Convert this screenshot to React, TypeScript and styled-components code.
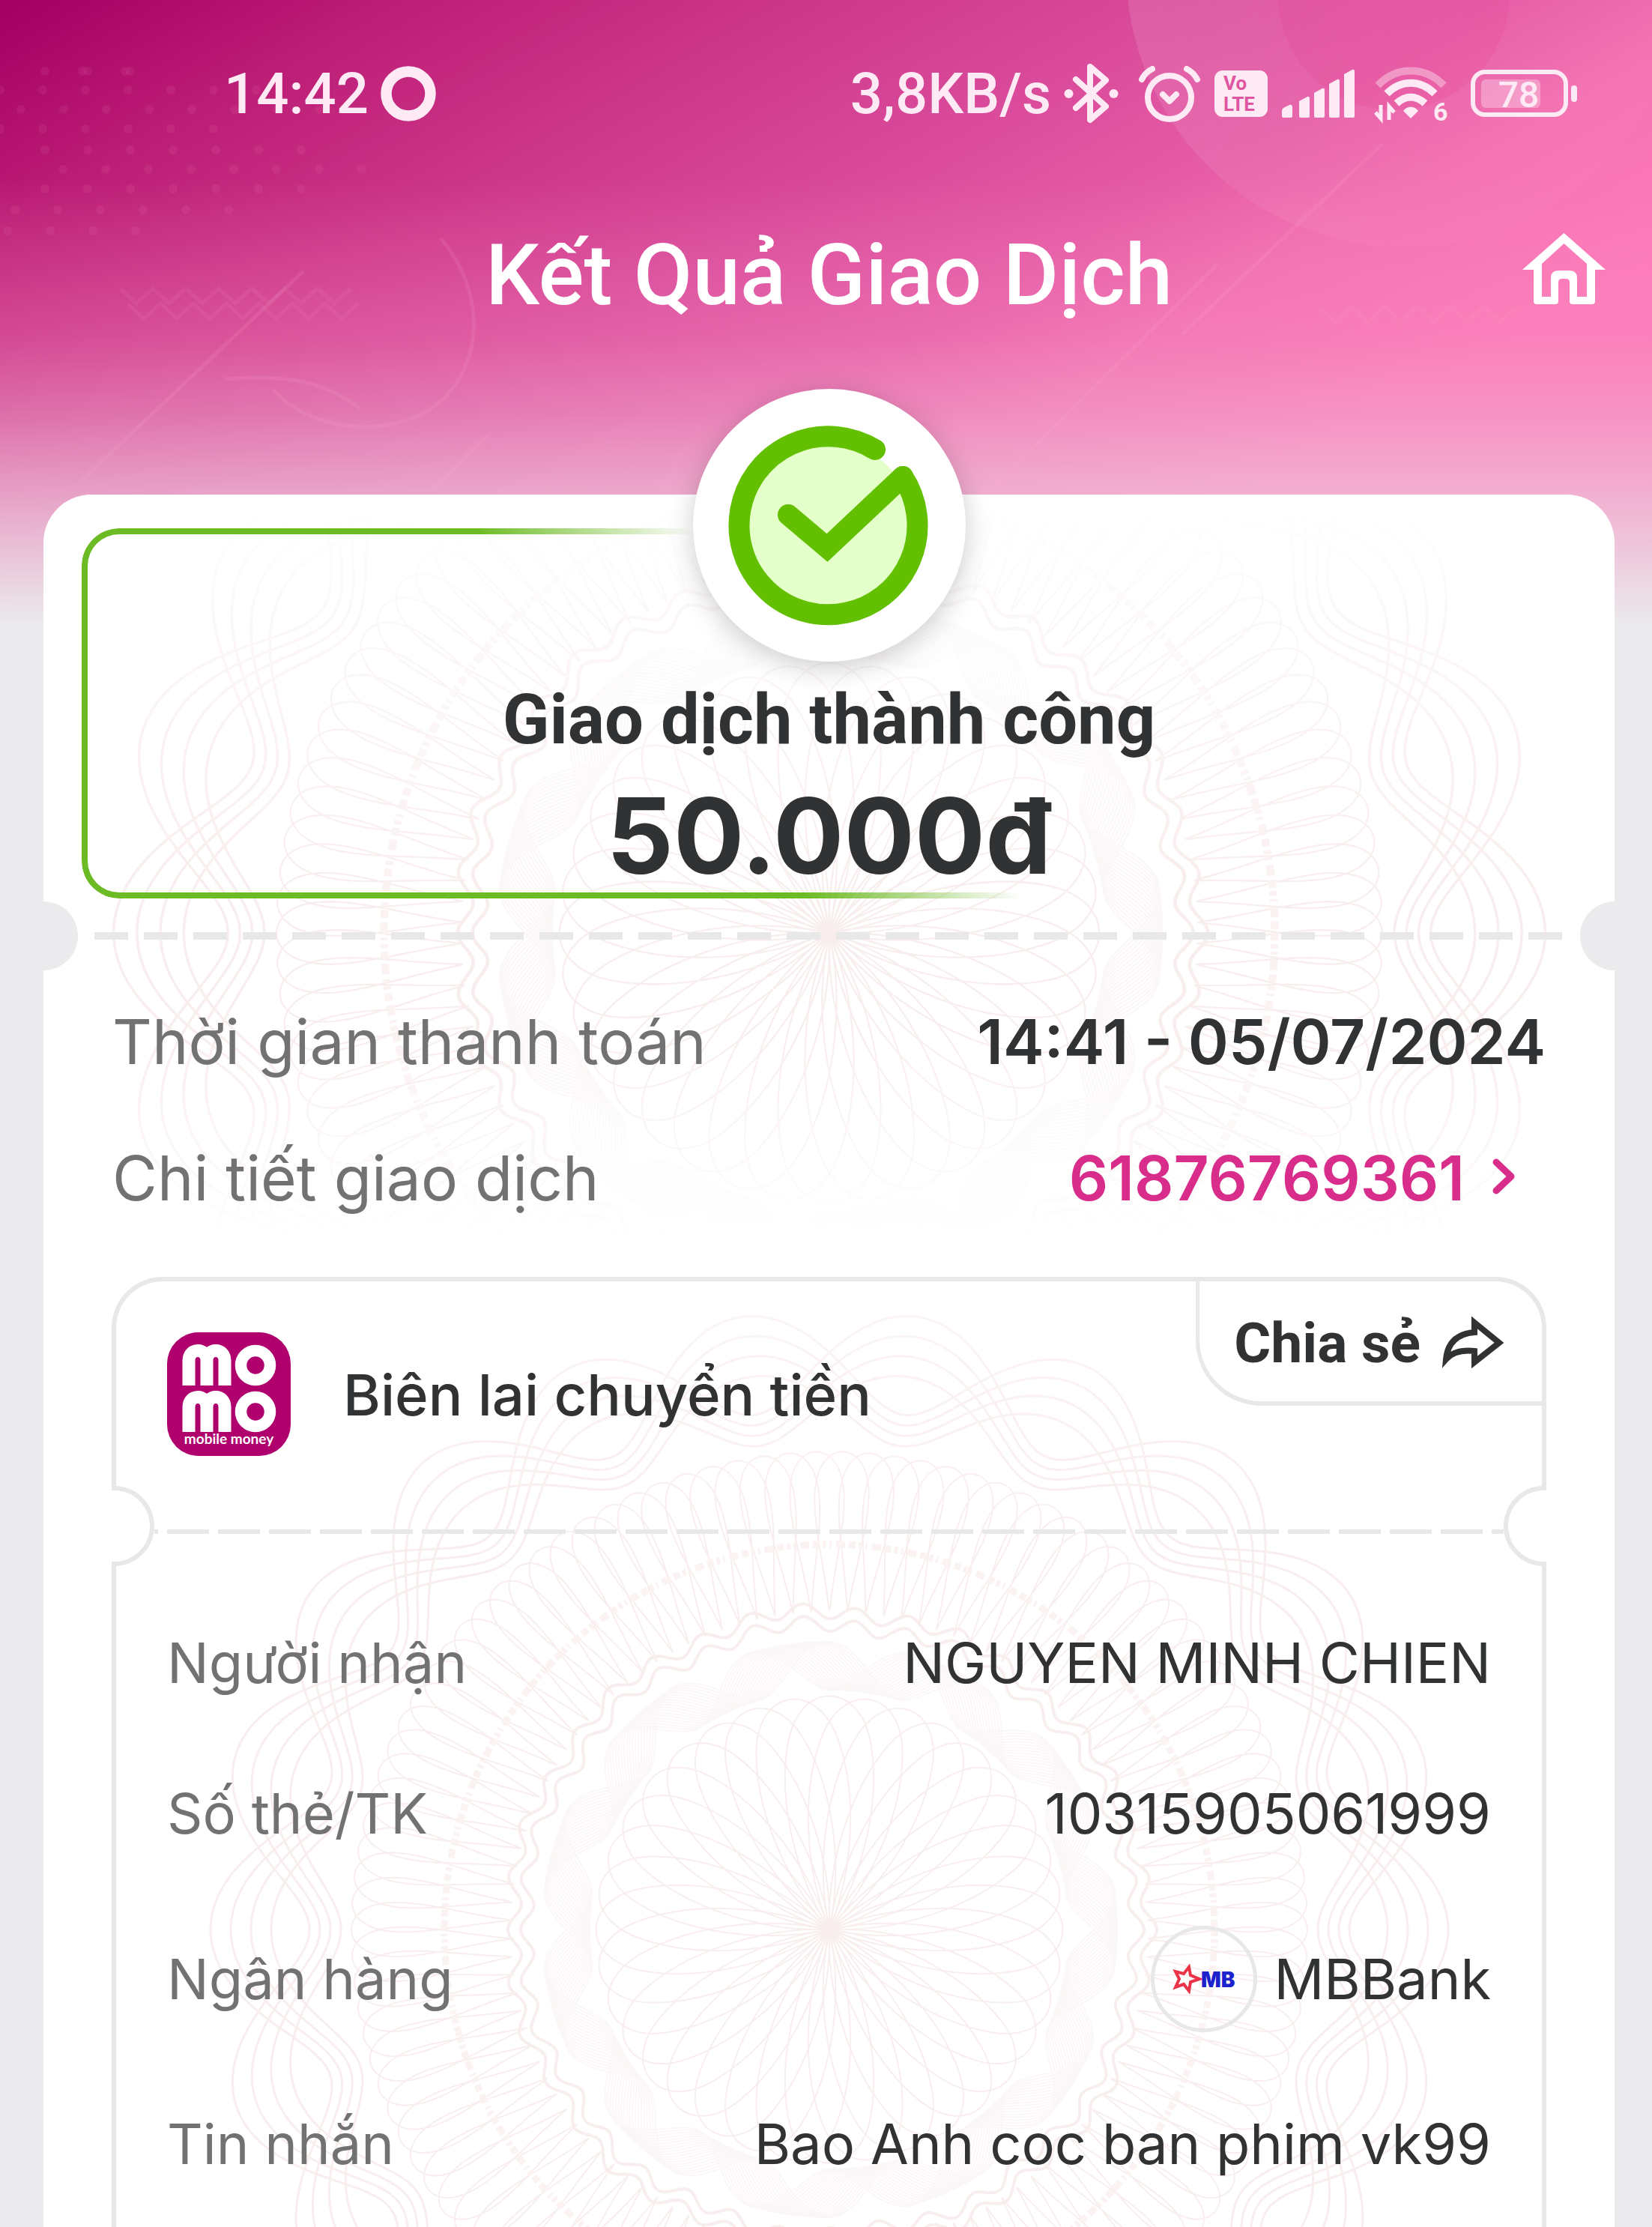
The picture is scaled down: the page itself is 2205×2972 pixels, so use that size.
import React from "react";
import styled, { createGlobalStyle } from "styled-components";

const color = {
  page: "#ebebed",
  line: "#e8e8e8",
  text: "#303233",
  label: "#727272",
  pink: "#d82d8b",
  green: "#62c000",
  outline: "#6cbb24",
  status: "#fdeaf4",
  brand: "#af006d",
};

const GlobalStyle = createGlobalStyle`
  * { box-sizing: border-box; }
  body {
    margin: 0;
    background: ${color.page};
    color: ${color.text};
    font-family: Inter, "Noto Sans", sans-serif;
  }
  h1, h2, p, dl, dt, dd { margin: 0; }
  button { border: 0; padding: 0; background: none; font: inherit; color: inherit; cursor: pointer; }
  a { color: inherit; text-decoration: none; }
  svg { display: block; flex: none; }
`;

/* ---------- page frame ---------- */

const Page = styled.div`
  position: relative;
  display: flex;
  flex-direction: column;
  min-height: 100vh;
  padding: 80px 50px 0 58px;
  overflow: hidden;
`;

const Backdrop = styled.div`
  position: absolute;
  inset: 0 0 auto 0;
  height: 840px;
  overflow: hidden;
  background:
    linear-gradient(
      180deg,
      rgba(244, 140, 190, 0) 240px,
      rgba(244, 140, 190, 0.33) 450px,
      rgba(240, 170, 205, 0.5) 550px,
      rgba(238, 190, 215, 0.74) 650px,
      rgba(236, 210, 224, 0.9) 740px,
      ${color.page} 835px
    ),
    linear-gradient(
      150deg,
      #a50064 20px,
      #bc1d76 260px,
      #ce388a 550px,
      #d94a9a 780px,
      #e65ca6 1000px,
      #f370b1 1160px,
      #ff7aba 1400px
    );
`;

const StatusBar = styled.div`
  position: relative;
  display: flex;
  align-items: center;
  justify-content: space-between;
  height: 90px;
  padding: 0 49px 0 241px;
  color: ${color.status};
  font: 500 76px/90px Roboto, "Noto Sans", sans-serif;
`;

const StatusGroup = styled.div`
  display: flex;
  align-items: center;
  gap: 16px;
`;

const TitleBar = styled.header`
  position: relative;
  display: grid;
  grid-template-columns: 1fr auto 1fr;
  align-items: center;
  height: 132px;
  margin: 131px 0 227px;
  color: #fff;
`;

const Title = styled.h1`
  grid-column: 2;
  font: 500 114px/132px Roboto, "Noto Sans", sans-serif;
`;

const HomeButton = styled.button`
  align-self: start;
  justify-self: end;
  padding: 10px 12px;
`;

/* ---------- result card ---------- */

const Card = styled.main`
  position: relative;
  flex: 1;
  display: flex;
  flex-direction: column;
  background: #fff;
  border-radius: 64px 64px 0 0;
`;

const WatermarkClip = styled.div`
  position: absolute;
  inset: 0;
  overflow: hidden;
  border-radius: inherit;
`;

const Watermark = styled.div<{ $top: number; $size: number; $mask: string }>`
  position: absolute;
  top: ${(p) => p.$top}px;
  left: 50%;
  width: ${(p) => p.$size}px;
  height: ${(p) => p.$size}px;
  margin-left: -${(p) => p.$size / 2}px;
  pointer-events: none;
  mask-image: ${(p) => p.$mask};
`;

const GreenOutline = styled.div`
  position: absolute;
  top: 45px;
  left: 51px;
  width: 1260px;
  height: 494px;
  border: 8px solid ${color.outline};
  border-right: 0;
  border-radius: 50px 0 0 50px;
  mask-image: linear-gradient(48deg, #000 720px, transparent 935px);
`;

const Summary = styled.section`
  position: relative;
  display: flex;
  flex-direction: column;
  align-items: center;
  margin-top: -141px;
  padding-bottom: 8px;
`;

const Badge = styled.div`
  display: grid;
  place-items: center;
  width: 364px;
  height: 364px;
  margin-bottom: 22px;
  border-radius: 50%;
  background: #fff;
  box-shadow: 0 8px 36px rgba(0, 0, 0, 0.2);
`;

const ResultText = styled.h2`
  font: 700 92px/112px Roboto, "Noto Sans", sans-serif;
`;

const Amount = styled.p`
  margin-top: 18px;
  font-size: 140px;
  line-height: 160px;
  font-weight: 700;
`;

const Perforation = styled.div`
  position: relative;
  display: flex;
  align-items: center;
  justify-content: space-between;
`;

const CardNotch = styled.span<{ $side: "left" | "right" }>`
  width: 46px;
  height: 92px;
  background: ${color.page};
  border-radius: ${(p) => (p.$side === "left" ? "0 46px 46px 0" : "46px 0 0 46px")};
`;

const CardDashes = styled.span`
  flex: 1;
  height: 10px;
  margin: 0 22px;
  background: repeating-linear-gradient(90deg, ${color.line} 0 45px, transparent 45px 66px);
`;

const Facts = styled.dl`
  position: relative;
  display: flex;
  flex-direction: column;
  gap: 72px;
  padding: 41px 92px 76px;
`;

const Fact = styled.div`
  display: flex;
  align-items: center;
  justify-content: space-between;
  height: 110px;
  font-size: 82px;
  line-height: 110px;
`;

const FactLabel = styled.dt`
  color: ${color.label};
`;

const FactValue = styled.dd`
  font-weight: 600;
`;

const DetailLink = styled.a`
  display: flex;
  align-items: center;
  gap: 36px;
  padding-right: 38px;
  color: ${color.pink};
`;

/* ---------- receipt ---------- */

const Receipt = styled.section`
  position: relative;
  flex: 1;
  margin: 0 91px;
  border: 6px solid ${color.line};
  border-bottom: 0;
  border-radius: 68px 68px 0 0;
`;

const ReceiptHead = styled.div`
  display: flex;
  align-items: flex-start;
  justify-content: space-between;
`;

const Brand = styled.div`
  display: flex;
  align-items: center;
  gap: 70px;
  padding: 68px 0 40px 68px;
`;

const ReceiptTitle = styled.h2`
  font-size: 76px;
  line-height: 104px;
  font-weight: 500;
`;

const ShareButton = styled.button`
  display: flex;
  align-items: center;
  gap: 28px;
  height: 166px;
  padding: 4px 50px 0 46px;
  border-left: 5px solid ${color.line};
  border-bottom: 6px solid ${color.line};
  border-bottom-left-radius: 88px;
  font: 700 75px/104px Roboto, "Noto Sans", sans-serif;
`;

const ReceiptNotch = styled.span<{ $side: "left" | "right" }>`
  width: 57px;
  height: 107px;
  background: #fff;
  border: 6px solid ${color.line};
  ${(p) =>
    p.$side === "left"
      ? "margin-left: -6px; border-left: 0; border-radius: 0 54px 54px 0;"
      : "margin-right: -6px; border-right: 0; border-radius: 54px 0 0 54px;"}
`;

const ReceiptDashes = styled.span`
  flex: 1;
  height: 20px;
  border-top: 14px solid transparent;
  background: repeating-linear-gradient(
      90deg,
      ${color.line} 0 5px,
      transparent 5px 17px,
      ${color.line} 17px 68px
    )
    padding-box;
`;

const Details = styled.dl`
  display: flex;
  flex-direction: column;
  gap: 98px;
  padding: 78px 68px 56px;
`;

const Detail = styled.div`
  display: flex;
  align-items: center;
  justify-content: space-between;
  font-size: 74px;
  line-height: 103px;
`;

const DetailLabel = styled.dt`
  color: ${color.label};
`;

const DetailValue = styled.dd`
  display: flex;
  align-items: center;
  gap: 22px;
`;

const BankLogo = styled.span`
  display: grid;
  place-items: center;
  width: 142px;
  height: 142px;
  border: 5px solid ${color.line};
  border-radius: 50%;
`;

/* ---------- guilloche rosette ---------- */

const polarPath = (steps: number, at: (t: number) => [number, number]) => {
  const points: string[] = [];
  for (let i = 0; i < steps; i++) {
    const [r, a] = at((i / steps) * Math.PI * 2);
    points.push(`${(r * Math.cos(a)).toFixed(1)} ${(r * Math.sin(a)).toFixed(1)}`);
  }
  return `M${points.join("L")}Z`;
};

const waves = [0, 1, 2, 3].flatMap((k) =>
  [1, -1].map((sign) => {
    const max = 826 - 27 * k;
    const min = 694 - 14 * k;
    return polarPath(720, (t) => [
      (max + min) / 2 + (sign * (max - min) * Math.cos(11 * t)) / 2,
      t + sign * 0.014 * Math.sin(11 * t),
    ]);
  })
);

const loops = polarPath(6600, (t) => [
  532 + 106 * Math.cos(110 * t),
  t + 0.075 * Math.sin(110 * t) * (0.6 + 0.4 * Math.cos(110 * t)),
]);

const scallops = [424, 407].map((base) =>
  polarPath(1200, (t) => [base + 9 * Math.cos(38 * t) + 4 * Math.cos(11 * t), t])
);

const mesh = Array.from({ length: 10 }, (_, k) => k).flatMap((k) =>
  [1, -1].map((sign) =>
    polarPath(500, (t) => [352 + 32 * Math.cos(11 * t + sign * k * 0.17), t])
  )
);

const petals = Array.from({ length: 36 }, (_, k) => k * 10);

const Rosette = () => (
  <svg viewBox="-830 -830 1660 1660" width="100%" height="100%" fill="none" stroke="#f9eeee" strokeWidth="3" aria-hidden="true">
    {waves.map((d, i) => (
      <path key={i} d={d} />
    ))}
    <path d={loops} strokeWidth="2" />
    <circle r="514" strokeWidth="9" strokeDasharray="9 4 5 4 3 6 12 5" stroke="#fbf2f2" />
    {scallops.map((d, i) => (
      <path key={i} d={d} strokeWidth="4" />
    ))}
    <g stroke="#fcf7f7" strokeWidth="2">
      {mesh.map((d, i) => (
        <path key={i} d={d} />
      ))}
    </g>
    {petals.map((a) => (
      <path key={a} d="M0 0C80 -50 180 -68 250 -55C332 -40 332 40 250 55C180 68 80 50 0 0Z" transform={`rotate(${a})`} strokeWidth="2" />
    ))}
  </svg>
);

/* ---------- drawings ---------- */

const zigzag = (x: number, y: number, n: number) =>
  `M${x} ${y}` + Array.from({ length: n }, (_, i) => `l22 ${i % 2 ? -20 : 20}`).join("");

const dotRows = [
  [95, 60, 3], [95, 110, 2], [120, 0, 7], [146, 28, 8], [172, 0, 6], [200, 60, 7],
  [226, 84, 8], [252, 60, 7], [280, 20, 6], [308, 10, 4],
];

const BackdropArt = () => (
  <svg width="2205" height="840" fill="none" stroke="#ffb4d8" strokeWidth="5" strokeOpacity="0.13" aria-hidden="true">
    <defs>
      <linearGradient id="halo" x1="0" y1="0" x2="1" y2="0.5">
        <stop offset="0.1" stopColor="#fff" stopOpacity="0.14" />
        <stop offset="0.8" stopColor="#fff" stopOpacity="0.02" />
      </linearGradient>
    </defs>
    <circle cx="1875" cy="-42" r="372" fill="url(#halo)" stroke="none" />
    <circle cx="1860" cy="-8" r="155" fill="#e8408f" fillOpacity="0.2" stroke="none" />
    <path d="M405 362L110 640M1845 192L1578 446M1625 352L1325 652M650 582L575 655" />
    <path d="M588 318C640 380 645 455 610 510C560 590 420 585 365 520M300 506C370 500 430 505 480 545" />
    <g strokeOpacity="0.08">
      <path d={zigzag(160, 385, 14)} />
      <path d={zigzag(170, 405, 14)} />
      <path d={zigzag(1760, 410, 12)} />
    </g>
    <g fill="#ff9ccc" fillOpacity="0.09" stroke="none">
      {dotRows.map(([y, x, n]) =>
        Array.from({ length: n }, (_, i) => <circle key={`${x}-${y}-${i}`} cx={x + i * 57} cy={y} r="6" />)
      )}
    </g>
  </svg>
);

const RingIcon = () => (
  <svg width="74" height="74" viewBox="0 0 74 74" fill="none" aria-hidden="true">
    <circle cx="37" cy="37" r="29.5" stroke="currentColor" strokeWidth="14.5" />
  </svg>
);

const BluetoothIcon = () => (
  <svg width="76" height="82" viewBox="0 0 76 82" fill="none" stroke="currentColor" strokeWidth="8" strokeLinejoin="round" strokeLinecap="round" aria-hidden="true">
    <path d="M17 22L57 58L36 76V5L57 23L17 60" />
    <circle cx="7.500" cy="41" r="6" fill="currentColor" stroke="none" />
    <circle cx="67.500" cy="41" r="6" fill="currentColor" stroke="none" />
  </svg>
);

const AlarmIcon = () => (
  <svg width="94" height="78" viewBox="0 0 94 78" fill="none" stroke="currentColor" strokeWidth="8" strokeLinecap="round" aria-hidden="true">
    <circle cx="50" cy="44" r="29" />
    <path d="M13 20C16 14 21 9 27 6M73 6C79 9 84 14 87 20" />
    <path d="M41 40L50 49L59 40" strokeLinejoin="round" />
  </svg>
);

const VolteIcon = () => (
  <svg width="74" height="62" viewBox="0 0 74 62" aria-hidden="true">
    <rect width="71" height="62" rx="11" fill="currentColor" />
    <g fill="#e0559f" fontFamily="Roboto, sans-serif" fontWeight="700" fontSize="26">
      <text x="12" y="26">Vo</text>
      <text x="12" y="54">LTE</text>
    </g>
  </svg>
);

const SignalIcon = () => (
  <svg width="105" height="66" viewBox="0 0 105 66" fill="currentColor" aria-hidden="true">
    <path d="M0 63V56Q0 53 4 51L10 48Q14 47 14 51V63Q14 65 12 65H2Q0 65 0 63Z" />
    {[[23, 37], [43, 26], [63, 14], [83, 1]].map(([x, y]) => (
      <path key={x} d={`M${x} 63V${y + 6}L${x + 11} ${y}Q${x + 14} ${y - 1} ${x + 14} ${y + 3}V63Q${x + 14} 65 ${x + 12} 65H${x + 2}Q${x} 65 ${x} 63Z`} />
    ))}
  </svg>
);

const WifiIcon = () => (
  <svg width="115" height="94" viewBox="0 -10 115 94" fill="none" stroke="currentColor" strokeWidth="10" aria-hidden="true">
    <path d="M7 26C32 0 70 0 95 26" strokeOpacity="0.42" />
    <path d="M19 37C38 18 64 18 83 37" />
    <path d="M32 50C44 39 58 39 70 50" />
    <path d="M51 70L41 60C46 53 56 53 61 60Z" fill="currentColor" stroke="none" />
    <path d="M11 52V70L4 62M22 72V54L29 62" strokeWidth="5" />
    <text x="81" y="73" fill="currentColor" stroke="none" fontSize="34" fontWeight="700" fontFamily="Roboto, sans-serif">6</text>
  </svg>
);

const BatteryIcon = () => (
  <svg width="143" height="64" viewBox="0 0 143 64" aria-hidden="true">
    <rect x="3" y="3" width="124" height="57" rx="16" fill="none" stroke="currentColor" strokeWidth="6" />
    <rect x="14" y="13" width="79" height="38" rx="6" fill="currentColor" fillOpacity="0.36" />
    <rect x="134" y="21" width="8" height="22" rx="4" fill="currentColor" />
    <text x="64" y="50" textAnchor="middle" fill="currentColor" fontSize="48" fontWeight="500" fontFamily="Roboto, sans-serif">78</text>
  </svg>
);

const HomeIcon = () => (
  <svg width="111" height="96" viewBox="0 0 111 96" fill="currentColor" fillRule="evenodd" aria-hidden="true">
    <path d="M55.500 0L111 49H97V91Q97 95 93 95H67Q63 95 63 91V66Q63 61 58 61H53Q48 61 48 66V91Q48 95 44 95H19Q15 95 15 91V49H0ZM55.500 14L86 41V85H73V60Q73 50 63 50H48Q38 50 38 60V85H26V41Z" />
  </svg>
);

const SuccessIcon = () => (
  <svg width="270" height="268" viewBox="0 0 270 268" fill="none" stroke={color.green} strokeWidth="28" strokeLinecap="round" aria-hidden="true">
    <path d="M133 22A111 111 0 1 0 244 133C244 100 230 72 216 58A111 111 0 0 0 133 22Z" fill="#e4ffc9" stroke="none" />
    <path d="M196 33A119 119 0 1 0 233 69" />
    <path d="M233 69L132 164L80 120" />
  </svg>
);

const ChevronIcon = () => (
  <svg width="34" height="56" viewBox="0 0 34 56" fill="none" stroke="currentColor" strokeWidth="9" strokeLinecap="round" strokeLinejoin="round" aria-hidden="true">
    <path d="M6 6L26 25L6 44" />
  </svg>
);

const ShareIcon = () => (
  <svg width="84" height="74" viewBox="0 0 84 74" fill="none" stroke="currentColor" strokeWidth="8" strokeLinejoin="miter" aria-hidden="true">
    <path d="M44 10L77 37L44 63V48C25 46 14 50 6 59C8 37 21 25 44 23Z" />
  </svg>
);

const WordRow = ({ y }: { y: number }) => (
  <g transform={`translate(0 ${y})`}>
    <path d="M29 55V22C29 4 53 4 53 22V55M53 55V22C53 4 77 4 77 22V55" strokeWidth="17" />
    <circle cx="118" cy="28" r="19.500" strokeWidth="15.500" />
  </g>
);

const MomoLogo = () => (
  <svg width="165" height="165" viewBox="0 0 165 165" fill="none" stroke="#fff" role="img" aria-label="MoMo">
    <rect width="165" height="165" rx="42" fill={color.brand} stroke="none" />
    <WordRow y={16} />
    <WordRow y={78} />
    <text x="82.500" y="149" textAnchor="middle" fill="#fff" stroke="none" fontSize="19" fontWeight="700" fontFamily="Lato, sans-serif">mobile money</text>
  </svg>
);

const MbLogo = () => (
  <svg width="84" height="40" viewBox="0 0 84 40" aria-hidden="true">
    <path d="M22 4L24 15L36 20L24 24L22 36L15 27L4 31L9 20L4 10L15 13Z" fill="none" stroke="#ea3348" strokeWidth="4" />
    <text x="38" y="31" fontSize="28" fontWeight="900" fontFamily="Inter, sans-serif" fill="#1c22cc">MB</text>
  </svg>
);

/* ---------- page ---------- */

const details = [
  { label: "Người nhận", value: "NGUYEN MINH CHIEN" },
  { label: "Số thẻ/TK", value: "10315905061999" },
  { label: "Ngân hàng", value: "MBBank", bank: true },
  { label: "Tin nhắn", value: "Bao Anh coc ban phim vk99" },
];

export default function App() {
  return (
    <Page>
      <GlobalStyle />
      <Backdrop>
        <BackdropArt />
      </Backdrop>

      <StatusBar>
        <StatusGroup>
          14:42
          <RingIcon />
        </StatusGroup>
        <StatusGroup>
          3,8KB/s
          <BluetoothIcon />
          <AlarmIcon />
          <VolteIcon />
          <SignalIcon />
          <WifiIcon />
          <BatteryIcon />
        </StatusGroup>
      </StatusBar>

      <TitleBar>
        <Title>Kết Quả Giao Dịch</Title>
        <HomeButton type="button" aria-label="Trang chủ">
          <HomeIcon />
        </HomeButton>
      </TitleBar>

      <Card>
        <WatermarkClip>
          <Watermark $top={-375} $size={1920} $mask="linear-gradient(180deg, transparent 390px, rgba(0,0,0,0.5) 560px, #000 900px, #000 1100px, transparent 1370px)">
            <Rosette />
          </Watermark>
          <Watermark $top={1085} $size={1660} $mask="linear-gradient(180deg, rgba(0,0,0,0.6) 0, #000 300px)">
            <Rosette />
          </Watermark>
        </WatermarkClip>
        <GreenOutline />

        <Summary>
          <Badge>
            <SuccessIcon />
          </Badge>
          <ResultText>Giao dịch thành công</ResultText>
          <Amount>50.000đ</Amount>
        </Summary>

        <Perforation>
          <CardNotch $side="left" />
          <CardDashes />
          <CardNotch $side="right" />
        </Perforation>

        <Facts>
          <Fact>
            <FactLabel>Thời gian thanh toán</FactLabel>
            <FactValue>14:41 - 05/07/2024</FactValue>
          </Fact>
          <Fact>
            <FactLabel>Chi tiết giao dịch</FactLabel>
            <FactValue>
              <DetailLink href="#61876769361">
                61876769361
                <ChevronIcon />
              </DetailLink>
            </FactValue>
          </Fact>
        </Facts>

        <Receipt>
          <ReceiptHead>
            <Brand>
              <MomoLogo />
              <ReceiptTitle>Biên lai chuyển tiền</ReceiptTitle>
            </Brand>
            <ShareButton type="button">
              Chia sẻ
              <ShareIcon />
            </ShareButton>
          </ReceiptHead>
          <Perforation>
            <ReceiptNotch $side="left" />
            <ReceiptDashes />
            <ReceiptNotch $side="right" />
          </Perforation>
          <Details>
            {details.map((d) => (
              <Detail key={d.label}>
                <DetailLabel>{d.label}</DetailLabel>
                <DetailValue>
                  {d.bank && (
                    <BankLogo>
                      <MbLogo />
                    </BankLogo>
                  )}
                  {d.value}
                </DetailValue>
              </Detail>
            ))}
          </Details>
        </Receipt>
      </Card>
    </Page>
  );
}
